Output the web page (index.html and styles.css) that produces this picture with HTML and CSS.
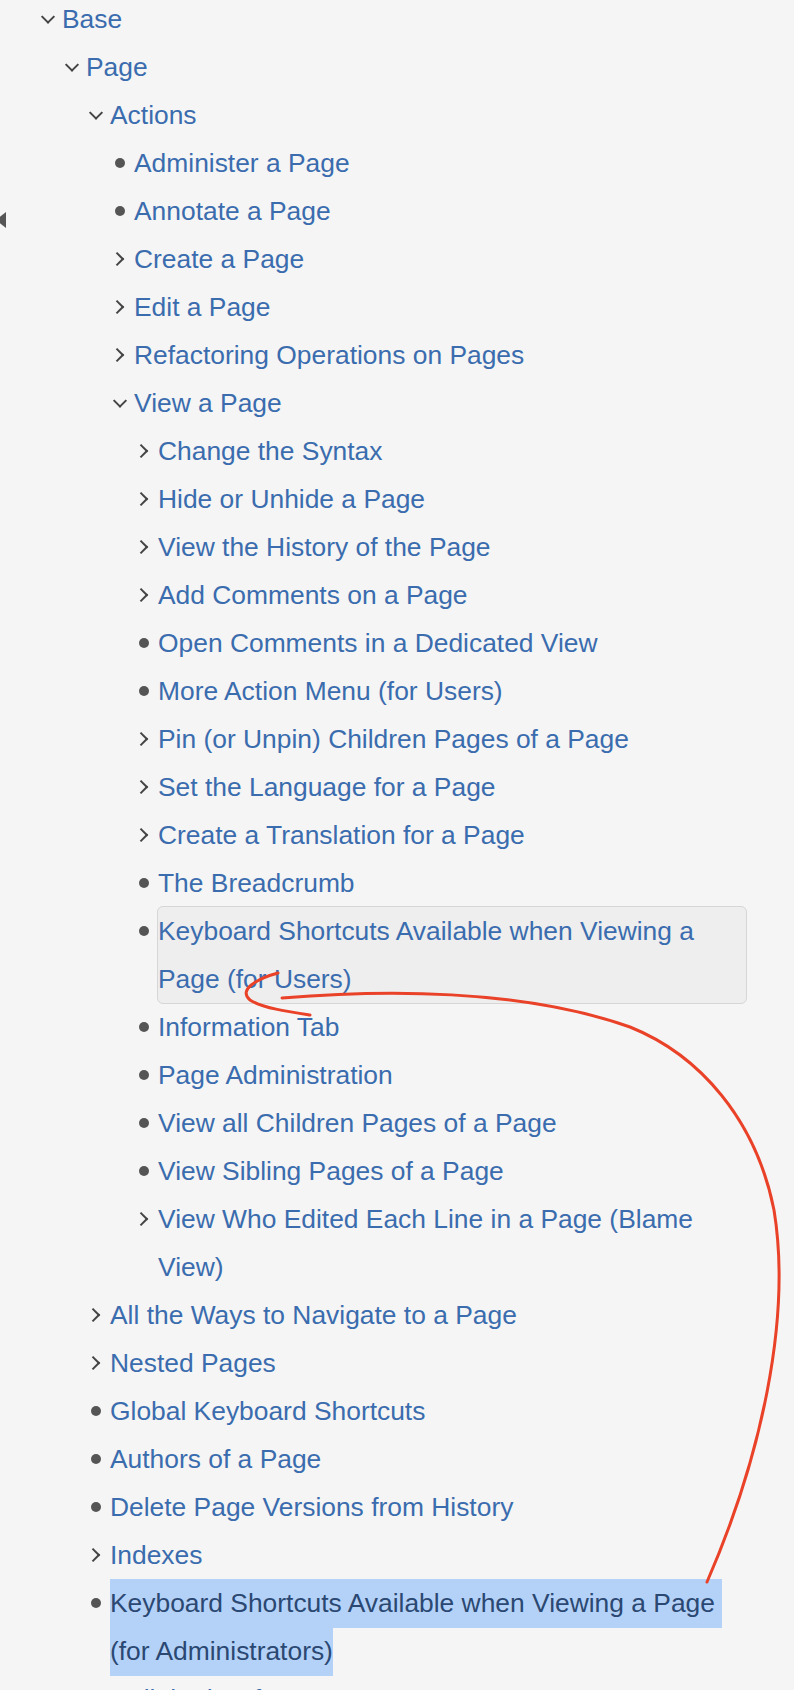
FILE: index.html
```html
<!DOCTYPE html>
<html lang="en">
<head>
    <meta charset="UTF-8">
    <title>Page Tree</title>
    <link rel="stylesheet" href="styles.css">
</head>
<body>

    <!-- collapsed side panel handle, mostly off screen -->
    <span class="panel-handle"></span>

    <ul class="tree">
        <li><div class="row"><span class="ico down"></span><a href="#">Base</a></div>
            <ul>
                <li><div class="row"><span class="ico down"></span><a href="#">Page</a></div>
                    <ul>
                        <li><div class="row"><span class="ico down"></span><a href="#">Actions</a></div>
                            <ul>
                                <li><div class="row"><span class="ico dot"></span><a href="#">Administer a Page</a></div></li>
                                <li><div class="row"><span class="ico dot"></span><a href="#">Annotate a Page</a></div></li>
                                <li><div class="row"><span class="ico right"></span><a href="#">Create a Page</a></div></li>
                                <li><div class="row"><span class="ico right"></span><a href="#">Edit a Page</a></div></li>
                                <li><div class="row"><span class="ico right"></span><a href="#">Refactoring Operations on Pages</a></div></li>
                                <li><div class="row"><span class="ico down"></span><a href="#">View a Page</a></div>
                                    <ul>
                                        <li><div class="row"><span class="ico right"></span><a href="#">Change the Syntax</a></div></li>
                                        <li><div class="row"><span class="ico right"></span><a href="#">Hide or Unhide a Page</a></div></li>
                                        <li><div class="row"><span class="ico right"></span><a href="#">View the History of the Page</a></div></li>
                                        <li><div class="row"><span class="ico right"></span><a href="#">Add Comments on a Page</a></div></li>
                                        <li><div class="row"><span class="ico dot"></span><a href="#">Open Comments in a Dedicated View</a></div></li>
                                        <li><div class="row"><span class="ico dot"></span><a href="#">More Action Menu (for Users)</a></div></li>
                                        <li><div class="row"><span class="ico right"></span><a href="#">Pin (or Unpin) Children Pages of a Page</a></div></li>
                                        <li><div class="row"><span class="ico right"></span><a href="#">Set the Language for a Page</a></div></li>
                                        <li><div class="row"><span class="ico right"></span><a href="#">Create a Translation for a Page</a></div></li>
                                        <li><div class="row"><span class="ico dot"></span><a href="#">The Breadcrumb</a></div></li>
                                        <li><div class="row"><span class="ico dot"></span><a href="#" class="hover">Keyboard Shortcuts Available when Viewing a Page (for Users)</a></div></li>
                                        <li><div class="row"><span class="ico dot"></span><a href="#">Information Tab</a></div></li>
                                        <li><div class="row"><span class="ico dot"></span><a href="#">Page Administration</a></div></li>
                                        <li><div class="row"><span class="ico dot"></span><a href="#">View all Children Pages of a Page</a></div></li>
                                        <li><div class="row"><span class="ico dot"></span><a href="#">View Sibling Pages of a Page</a></div></li>
                                        <li><div class="row"><span class="ico right"></span><a href="#">View Who Edited Each Line in a Page (Blame View)</a></div></li>
                                    </ul>
                                </li>
                            </ul>
                        </li>
                        <li><div class="row"><span class="ico right"></span><a href="#">All the Ways to Navigate to a Page</a></div></li>
                        <li><div class="row"><span class="ico right"></span><a href="#">Nested Pages</a></div></li>
                        <li><div class="row"><span class="ico dot"></span><a href="#">Global Keyboard Shortcuts</a></div></li>
                        <li><div class="row"><span class="ico dot"></span><a href="#">Authors of a Page</a></div></li>
                        <li><div class="row"><span class="ico dot"></span><a href="#">Delete Page Versions from History</a></div></li>
                        <li><div class="row"><span class="ico right"></span><a href="#">Indexes</a></div></li>
                        <li><div class="row"><span class="ico dot"></span><a href="#" class="picked"><span class="sel">Keyboard Shortcuts Available when Viewing a Page&nbsp;<wbr>(for Administrators)</span></a></div></li>
                        <li><div class="row"><span class="ico dot"></span><a href="#">Unlinked References</a></div></li>
                    </ul>
                </li>
            </ul>
        </li>
    </ul>

    <!-- hand drawn annotation on top of the tree -->
    <svg class="scribble" width="794" height="1690" viewBox="0 0 794 1690">
        <path d="M278,973 C256,979 238,990 250,1000 C262,1008 290,1012 310,1015" />
        <path d="M282,998 C380,990 520,988 630,1027 C700,1055 756,1120 774,1210 C792,1320 760,1460 707,1582" />
    </svg>

</body>
</html>
```

FILE: styles.css
```css
body {
    margin: 0;
    background-color: #f5f5f5;
    font-family: "Liberation Sans", Arial, Helvetica, sans-serif;
    font-size: 26.4px;
    line-height: 48px;
    color: #3a6cae;
    position: relative;
    overflow: hidden;
    height: 1690px;
}

.panel-handle {
    position: absolute;
    left: -4px;
    top: 212px;
    width: 0;
    height: 0;
    border-top: 8px solid transparent;
    border-bottom: 8px solid transparent;
    border-right: 10px solid #555;
}

.tree {
    list-style: none;
    margin: -5px 0 0 0;
    padding: 0 47px 0 34px;
}

.tree ul {
    list-style: none;
    margin: 0;
    padding: 0 0 0 24px;
}

.row {
    display: flex;
    align-items: flex-start;
}

.ico {
    flex: 0 0 28px;
    height: 48px;
    position: relative;
}

.ico::before {
    content: '';
    position: absolute;
    left: 50%;
    top: 50%;
    box-sizing: border-box;
}

.ico.down::before {
    width: 10px;
    height: 10px;
    border-right: 2.5px solid #444;
    border-bottom: 2.5px solid #444;
    transform: translate(-50%, -72%) rotate(45deg);
}

.ico.right::before {
    width: 10px;
    height: 10px;
    border-right: 2.5px solid #444;
    border-bottom: 2.5px solid #444;
    transform: translate(-78%, -50%) rotate(-45deg);
}

.ico.dot::before {
    width: 10px;
    height: 10px;
    border-radius: 50%;
    background-color: #555;
    transform: translate(-50%, -50%);
}

.row a {
    flex: 1;
    color: #3a6cae;
    text-decoration: none;
}

/* item under the mouse */
.row a.hover {
    background-color: #eeeeee;
    border: 1px solid #d6d6d6;
    border-radius: 6px;
    margin: -1px 0 -1px -1px;
}

/* text selection */
.sel {
    background-color: #b4d2f8;
    color: #2b4872;
    padding: 9px 0 10px 0;
}

.scribble {
    position: absolute;
    left: 0;
    top: 0;
    pointer-events: none;
}

.scribble path {
    fill: none;
    stroke: #ea4228;
    stroke-width: 3;
    stroke-linecap: round;
}
```
